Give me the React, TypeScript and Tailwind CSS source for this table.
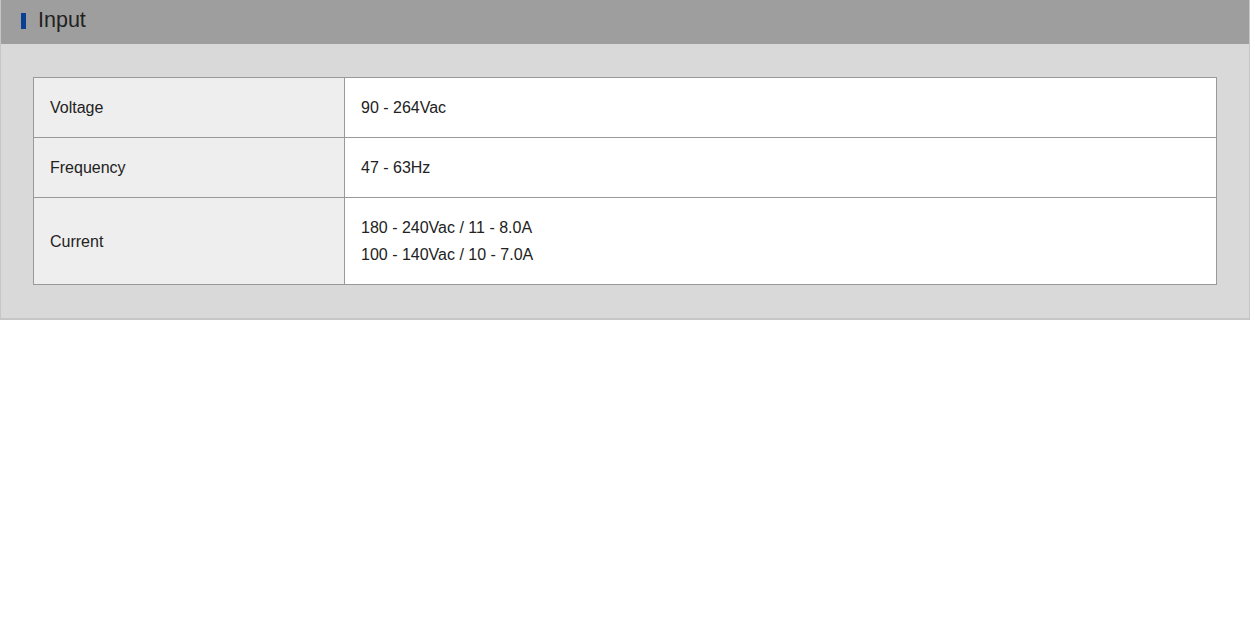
import React from "react";

const rows: { label: string; values: string[] }[] = [
  { label: "Voltage", values: ["90 - 264Vac"] },
  { label: "Frequency", values: ["47 - 63Hz"] },
  { label: "Current", values: ["180 - 240Vac / 11 - 8.0A", "100 - 140Vac / 10 - 7.0A"] },
];

export default function App() {
  return (
    <div className="bg-white min-h-[628px] w-full" style={{ fontFamily: '"Liberation Sans", Arial, sans-serif' }}>
      <div className="w-[1250px] border-x border-b-2 border-[#c6c6c6] bg-[#d9d9d9]">
        <div className="h-[44px] bg-[#9e9e9e] flex items-center pl-[20px] pb-[3px]">
          <span className="w-[5px] h-[16px] bg-[#0b3f94] mr-[12px] mt-[1px]" />
          <span className="text-[21.5px] text-[#222] leading-none">Input</span>
        </div>
        <div className="pt-[33px] pb-[33px] px-[32px]">
          <table className="w-full border-collapse border border-[#999] text-[16px] text-[#222]">
            <tbody>
              {rows.map((r) => (
                <tr key={r.label} className="border-b border-[#999]">
                  <td className="w-[311px] bg-[#eeeeee] border-r border-[#999] pl-[16px] py-[16px] leading-[27px] align-middle">
                    {r.label}
                  </td>
                  <td className="bg-white pl-[16px] py-[16px] leading-[27px]">
                    {r.values.map((v) => (
                      <div key={v}>{v}</div>
                    ))}
                  </td>
                </tr>
              ))}
            </tbody>
          </table>
        </div>
      </div>
    </div>
  );
}
